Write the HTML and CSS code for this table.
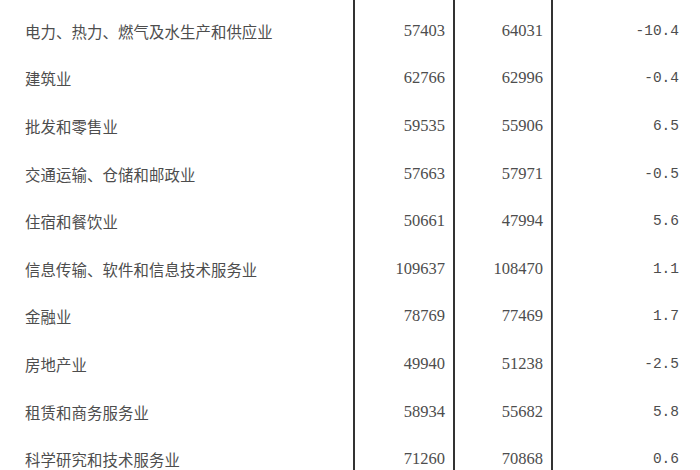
FILE: index.html
```html
<!DOCTYPE html>
<html lang="zh">
<head>
<meta charset="utf-8">
<link rel="stylesheet" href="styles.css">
</head>
<body>
<table class="wage-table">
  <tbody>
    <tr><td class="name">电力、热力、燃气及水生产和供应业</td><td class="num">57403</td><td class="num">64031</td><td class="pct">-10.4</td></tr>
    <tr><td class="name">建筑业</td><td class="num">62766</td><td class="num">62996</td><td class="pct">-0.4</td></tr>
    <tr><td class="name">批发和零售业</td><td class="num">59535</td><td class="num">55906</td><td class="pct">6.5</td></tr>
    <tr><td class="name">交通运输、仓储和邮政业</td><td class="num">57663</td><td class="num">57971</td><td class="pct">-0.5</td></tr>
    <tr><td class="name">住宿和餐饮业</td><td class="num">50661</td><td class="num">47994</td><td class="pct">5.6</td></tr>
    <tr><td class="name">信息传输、软件和信息技术服务业</td><td class="num">109637</td><td class="num">108470</td><td class="pct">1.1</td></tr>
    <tr><td class="name">金融业</td><td class="num">78769</td><td class="num">77469</td><td class="pct">1.7</td></tr>
    <tr><td class="name">房地产业</td><td class="num">49940</td><td class="num">51238</td><td class="pct">-2.5</td></tr>
    <tr><td class="name">租赁和商务服务业</td><td class="num">58934</td><td class="num">55682</td><td class="pct">5.8</td></tr>
    <tr><td class="name">科学研究和技术服务业</td><td class="num">71260</td><td class="num">70868</td><td class="pct">0.6</td></tr>
  </tbody>
</table>
</body>
</html>
```

FILE: styles.css
```css
html, body {
  margin: 0;
  padding: 0;
  background: #ffffff;
  width: 700px;
  height: 470px;
  overflow: hidden;
}

.wage-table {
  border-collapse: collapse;
  table-layout: fixed;
  width: 700px;
  color: #4d4d4d;
}

.wage-table td {
  height: 47.6px;
  padding: 0;
  vertical-align: middle;
  white-space: nowrap;
}

.wage-table tr:first-child td {
  padding-top: 7px;
}

.name {
  width: 328px;
  padding-left: 25px !important;
  font-family: "Noto Sans CJK SC", "Noto Sans", sans-serif;
  font-size: 15.4px;
  letter-spacing: 0.1px;
}

.num {
  width: 100px;
  border-left: 2px solid #333333;
  text-align: right;
  font-family: "Liberation Serif", "DejaVu Serif", serif;
  font-size: 16.5px;
  padding-right: 8px !important;
  box-sizing: border-box;
}

.num + .num {
  width: 98px;
  padding-right: 8px !important;
}

.pct {
  border-left: 2px solid #333333;
  text-align: right;
  font-family: "Liberation Mono", "DejaVu Sans Mono", monospace;
  font-size: 14.5px;
  padding-right: 21px !important;
}
```
